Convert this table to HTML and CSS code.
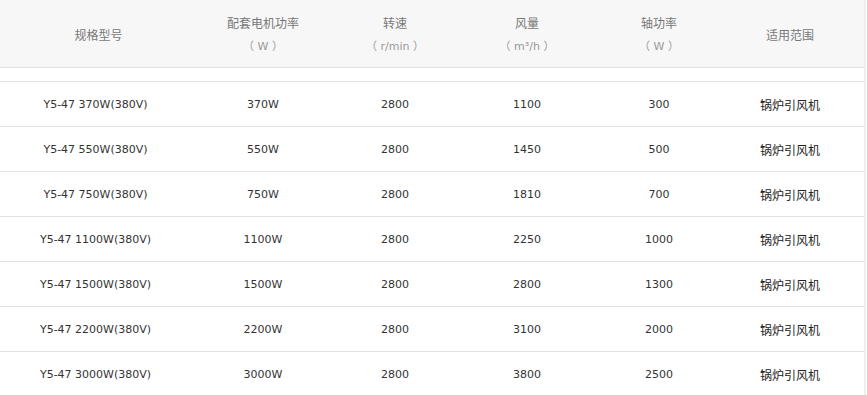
FILE: index.html
```html
<!DOCTYPE html>
<html lang="zh-CN">
<head>
<meta charset="utf-8">
<link rel="stylesheet" href="styles.css">
</head>
<body>
<div class="wrap">
<table class="spec">
  <colgroup>
    <col class="c1"><col class="cn"><col class="cn"><col class="cn"><col class="cn"><col class="clast">
  </colgroup>
  <thead>
    <tr>
      <th>规格型号</th>
      <th>配套电机功率<br><span class="unit">（ W ）</span></th>
      <th>转速<br><span class="unit">（ r/min ）</span></th>
      <th>风量<br><span class="unit">（ m³/h ）</span></th>
      <th>轴功率<br><span class="unit">（ W ）</span></th>
      <th class="last">适用范围</th>
    </tr>
  </thead>
  <tbody>
    <tr class="gap"><td colspan="6"></td></tr>
    <tr><td class="first">Y5-47 370W(380V)</td><td>370W</td><td>2800</td><td>1100</td><td>300</td><td class="cn-t last">锅炉引风机</td></tr>
    <tr><td class="first">Y5-47 550W(380V)</td><td>550W</td><td>2800</td><td>1450</td><td>500</td><td class="cn-t last">锅炉引风机</td></tr>
    <tr><td class="first">Y5-47 750W(380V)</td><td>750W</td><td>2800</td><td>1810</td><td>700</td><td class="cn-t last">锅炉引风机</td></tr>
    <tr><td class="first">Y5-47 1100W(380V)</td><td>1100W</td><td>2800</td><td>2250</td><td>1000</td><td class="cn-t last">锅炉引风机</td></tr>
    <tr><td class="first">Y5-47 1500W(380V)</td><td>1500W</td><td>2800</td><td>2800</td><td>1300</td><td class="cn-t last">锅炉引风机</td></tr>
    <tr><td class="first">Y5-47 2200W(380V)</td><td>2200W</td><td>2800</td><td>3100</td><td>2000</td><td class="cn-t last">锅炉引风机</td></tr>
    <tr><td class="first">Y5-47 3000W(380V)</td><td>3000W</td><td>2800</td><td>3800</td><td>2500</td><td class="cn-t last">锅炉引风机</td></tr>
  </tbody>
</table>
</div>
</body>
</html>
```
FILE: styles.css
```css
html, body {
  margin: 0;
  padding: 0;
  background: #fff;
}
.wrap {
  width: 864px;
  border-right: 2px solid #efefef;
  overflow: hidden;
}
.spec {
  width: 864px;
  border-collapse: collapse;
  table-layout: fixed;
  font-family: "DejaVu Sans", "Noto Sans CJK SC", sans-serif;
  font-size: 11px;
  color: #333;
}
.c1 { width: 197px; }
.cn { width: 132px; }
.clast { width: 139px; }
.spec thead tr {
  background: #f7f7f7;
}
.spec th {
  height: 65px;
  padding: 2px 0 0;
  font-family: "Noto Sans CJK SC", sans-serif;
  font-weight: normal;
  font-size: 12px;
  line-height: 22px;
  color: #777;
  text-align: center;
  vertical-align: middle;
  border-bottom: 1px solid #e2e2e2;
}
.spec th .unit {
  font-family: "DejaVu Sans", "Noto Sans CJK SC", sans-serif;
  font-size: 11px;
  color: #999;
}
.spec td {
  height: 44px;
  padding: 0;
  text-align: center;
  vertical-align: middle;
  border-bottom: 1px solid #e2e2e2;
}
.spec tr.gap td {
  height: 13px;
}
.spec .first {
  padding-right: 6px;
}
.spec .last {
  padding-right: 9px;
}
.spec td.cn-t {
  font-family: "Noto Sans CJK SC", sans-serif;
  font-size: 12px;
  color: #222;
}
```
